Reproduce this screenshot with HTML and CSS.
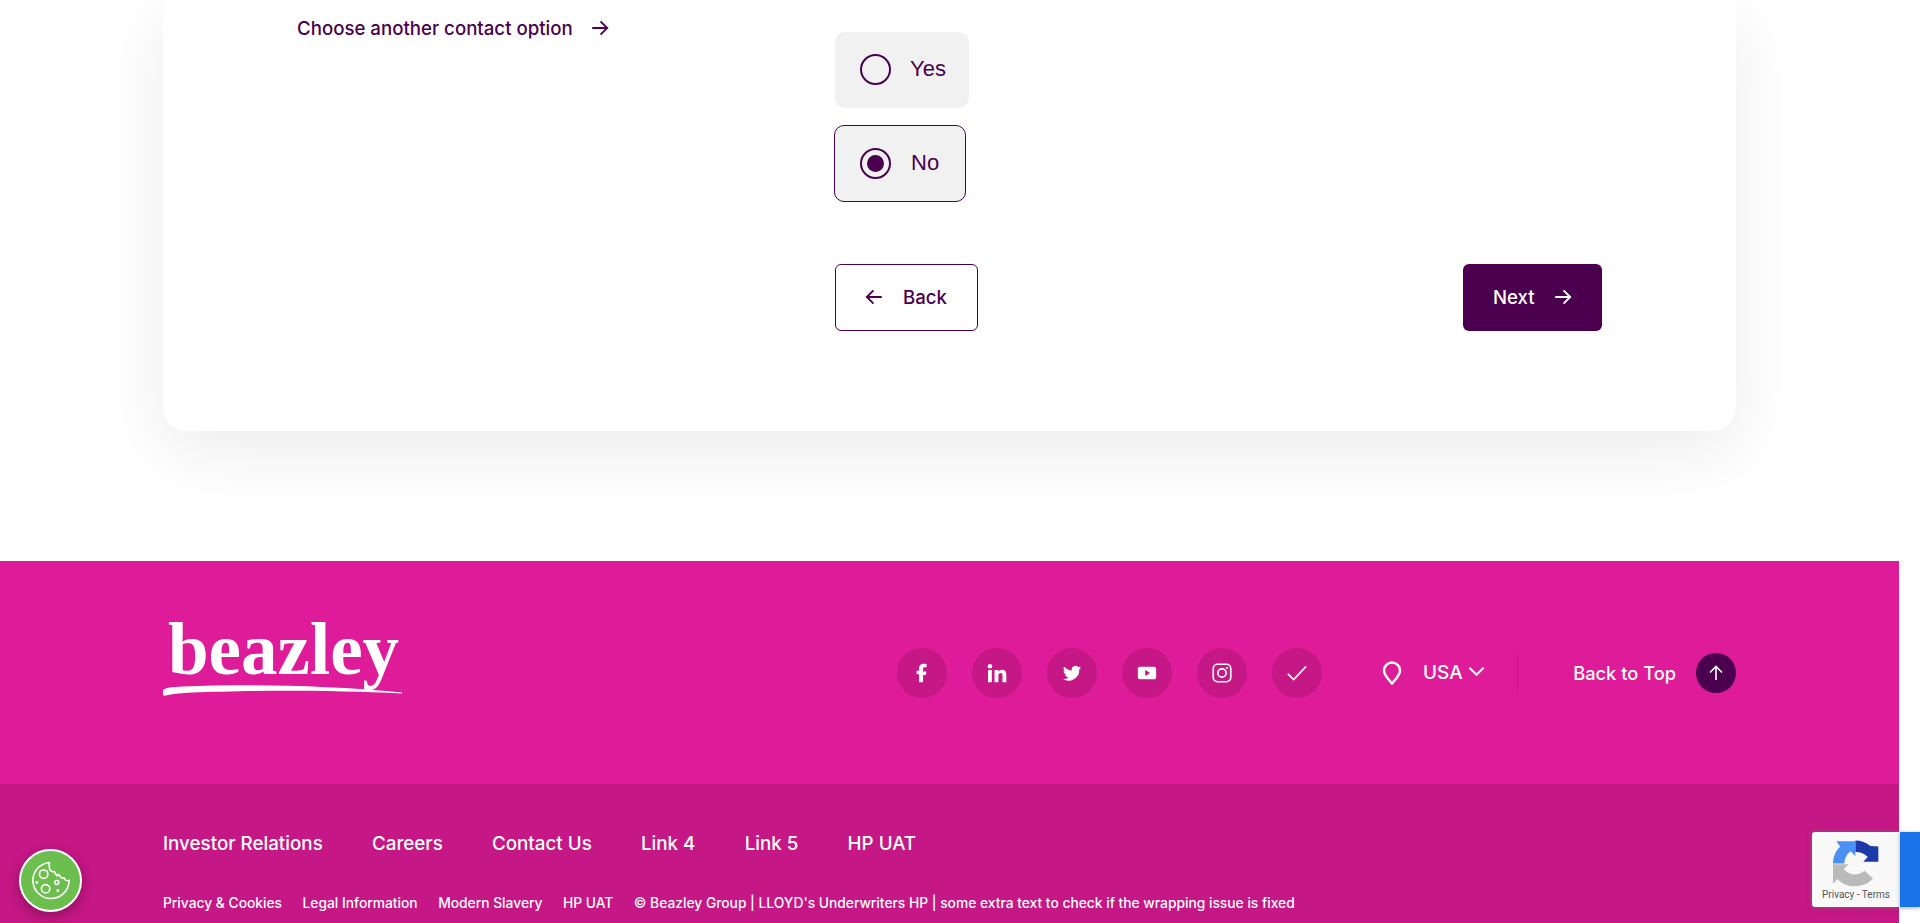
FILE: index.html
```html
<!DOCTYPE html>
<html lang="en">
<head>
<meta charset="utf-8">
<title>Beazley</title>
<link rel="stylesheet" href="styles.css">
</head>
<body>
<div class="page">
  <main class="main">
    <section class="card">
      <div class="side">
        <a class="contact-link" href="#">Choose another contact option
          <svg class="ico-arrow" viewBox="0 0 18 18"><path d="M2 9h13M9.500 3l6 6-6 6"/></svg>
        </a>
      </div>
      <form class="form">
        <div class="options">
          <label class="option option-yes"><span class="radio"></span><span>Yes</span></label>
          <label class="option option-no"><span class="radio radio-on"></span><span>No</span></label>
        </div>
        <div class="actions">
          <a class="btn btn-back" href="#"><svg class="ico-arrow" viewBox="0 0 18 18"><path d="M16 9H3M8.500 3l-6 6 6 6"/></svg>Back</a>
          <a class="btn btn-next" href="#">Next<svg class="ico-arrow" viewBox="0 0 18 18"><path d="M2 9h13M9.500 3l6 6-6 6"/></svg></a>
        </div>
      </form>
    </section>
  </main>
  <footer class="footer">
    <div class="footer-top">
      <a class="logo" href="#">
        <span class="logo-word">beazley</span>
        <svg class="logo-swoosh" viewBox="0 0 239 11"><path d="M0 5C3 2.500 8 2 20 1.500C80-1 160 0 239 7.500L239 8.500C160 4.500 80 5.500 30 7.500C15 8.300 5 9.500 1 11C-1 9 0 7 0 5Z"/></svg>
      </a>
      <div class="socials">
        <a class="social" href="#"><svg viewBox="0 0 24 24"><path class="fill" d="M8.500 23V13.500H5.500V9.200h3V6.600C8.500 3.200 10.500 1 14 1c1.500 0 3 .2 3.500.3v3.900h-2.300c-1.600 0-1.900.8-1.900 1.900v3.100h4l-.6 4.300h-3.400V23z"/></svg></a>
        <a class="social" href="#"><svg viewBox="0 0 24 24"><circle class="fill" cx="3.500" cy="4" r="2.700"/><path class="fill" d="M1.200 8.500h4.600V23H1.200zM9 8.500h4.400v2c.8-1.400 2.400-2.400 4.500-2.400 4.300 0 5.300 2.800 5.300 6.600V23h-4.600v-7.400c0-1.800-.1-3.600-2.300-3.600s-2.600 1.700-2.600 3.500V23H9z"/></svg></a>
        <a class="social" href="#"><svg viewBox="0 0 24 24"><path class="fill" d="M23 5.600c-.8.400-1.700.6-2.600.7.900-.6 1.600-1.400 2-2.500-.9.500-1.800.9-2.900 1.100A4.500 4.500 0 0 0 11.800 9C8 8.800 4.700 7 2.500 4.200c-1.200 2-.6 4.600 1.400 6-.7 0-1.400-.2-2-.6 0 2.200 1.500 4 3.600 4.500-.7.200-1.400.2-2 .1.600 1.800 2.200 3 4.200 3.100A9.100 9.100 0 0 1 1 19.200 12.800 12.800 0 0 0 20.700 7.800c.9-.6 1.700-1.300 2.300-2.200z"/></svg></a>
        <a class="social" href="#"><svg viewBox="0 0 24 24"><path class="fill" fill-rule="evenodd" d="M3.500 4.500h17c1.400 0 2.500 1.100 2.500 2.500v10c0 1.400-1.100 2.500-2.500 2.500h-17A2.500 2.500 0 0 1 1 17V7c0-1.400 1.100-2.500 2.500-2.500zM9.800 8.500v7l6-3.500z"/></svg></a>
        <a class="social" href="#"><svg viewBox="0 0 24 24"><rect class="line" x="1.500" y="1.500" width="21" height="21" rx="5"/><circle class="line" cx="12" cy="12" r="5"/><circle class="fill" cx="18" cy="6" r="1.300"/></svg></a>
        <a class="social" href="#"><svg viewBox="0 0 24 24"><path class="line" d="M1 13l7 7L23 4"/></svg></a>
      </div>
      <div class="region">
        <svg class="pin" viewBox="0 0 20 24"><path d="M10 22.500C6 18 2 14 2 9.500a8 8 0 0 1 16 0C18 14 14 18 10 22.500z"/></svg>
        <span>USA</span>
        <svg class="chev" viewBox="0 0 18 11"><path d="M1.500 1.500L9 9l7.500-7.500"/></svg>
      </div>
      <a class="to-top" href="#">Back to Top
        <span class="to-top-btn"><svg viewBox="0 0 18 18"><path d="M9 16V3M3 8.500l6-6 6 6"/></svg></span>
      </a>
    </div>
    <div class="footer-bottom">
      <nav class="links">
        <a href="#">Investor Relations</a>
        <a href="#">Careers</a>
        <a href="#">Contact Us</a>
        <a href="#">Link 4</a>
        <a href="#">Link 5</a>
        <a href="#">HP UAT</a>
      </nav>
      <div class="legal">
        <a href="#">Privacy &amp; Cookies</a>
        <a href="#">Legal Information</a>
        <a href="#">Modern Slavery</a>
        <a href="#">HP UAT</a>
        <span>© Beazley Group | LLOYD's Underwriters HP | some extra text to check if the wrapping issue is fixed</span>
      </div>
    </div>
  </footer>
</div>
<button class="cookie" type="button" aria-label="Cookies">
  <svg viewBox="0 0 44 44"><path class="cookie-line" d="M21 3.500a18.500 18.500 0 1 0 20 18.500c-2 .8-4.500-.3-5-2.500-2.200.6-4.500-.7-4.800-3-2.500.4-4.600-1-5-3.300-2.600 0-4.700-1.200-5.200-3.500-.5-2.200-.6-4.700 0-6.700z"/><circle class="cookie-line" cx="15" cy="15.500" r="4.300"/><circle class="cookie-line" cx="17" cy="30.500" r="4.300"/><circle class="cookie-line" cx="28.500" cy="24" r="2"/><circle class="cookie-dot" cx="8" cy="24" r="1.500"/><circle class="cookie-dot" cx="29" cy="16.500" r="1.500"/><circle class="cookie-dot" cx="29.500" cy="32.500" r="1.500"/></svg>
</button>
<aside class="recaptcha">
  <svg class="recaptcha-logo" viewBox="0 0 140 140">
    <path fill="#1c3aa9" d="M68 0C86 0 102 6 114 17L138 18V65H92L106 50C97 41 84 35 68 35Z"/>
    <path fill="#4a90f5" d="M68 2V48L54 33C42 41 35 55 35 70H0C0 50 8 31 22 19L10 2Z"/>
    <path fill="#bababa" d="M0 72H48L33 87C44 102 70 112 96 92L122 116C96 146 40 148 14 117L0 132Z"/>
  </svg>
  <span class="recaptcha-text">Privacy - Terms</span>
</aside>
<div class="recaptcha-tab"></div>
</body>
</html>
```

FILE: styles.css
```css
* { box-sizing: border-box; }
html, body { margin: 0; height: 923px; overflow: hidden; background: #fff; }
body { font-family: Inter, "Liberation Sans", sans-serif; color: #4b004f; position: relative; }
a { color: inherit; text-decoration: none; }
.page { width: 1899px; }

.main { padding: 0 163px 130px; }
.card {
  height: 431px;
  background: #fff;
  border-radius: 0 0 24px 24px;
  box-shadow: 0 20px 70px rgba(0, 0, 0, .08);
  padding: 0 134px;
  display: grid;
  grid-template-columns: 538px 1fr;
}
.contact-link { display: inline-flex; align-items: center; gap: 17px; font-size: 18.650px; font-weight: 450; line-height: 24px; margin-top: 16px; white-space: nowrap; }
.ico-arrow { width: 20px; height: 20px; fill: none; stroke: currentColor; stroke-width: 1.700; flex: none; }

.form { padding-top: 32px; }
.options { display: flex; flex-direction: column; align-items: flex-start; gap: 17px; }
.option { display: flex; align-items: center; gap: 19px; height: 76px; background: #f1f1f1; border-radius: 10px; font-family: "Liberation Sans", sans-serif; font-size: 22px; line-height: 26px; padding: 0 0 2px 25px; }
.option-yes { width: 134px; }
.option-no { width: 132px; height: 77px; margin-left: -1px; border: 1px solid #4b004f; padding-bottom: 1px; gap: 20px; }
.radio { width: 31px; height: 31px; border: 2px solid #4b004f; border-radius: 50%; display: flex; align-items: center; justify-content: center; flex: none; }
.radio-on::after { content: ""; width: 17px; height: 17px; border-radius: 50%; background: #4b004f; }

.actions { display: flex; justify-content: space-between; margin-top: 62px; }
.btn { height: 67px; display: flex; align-items: center; border-radius: 6px; font-size: 18.600px; font-weight: 450; padding-bottom: 2px; }
.btn-back { width: 143px; border: 1px solid #4b004f; padding-left: 28px; gap: 19px; }
.btn-next { width: 139px; background: #4b004f; color: #fff; padding-left: 30px; gap: 18px; }

.footer { background: #de1b98; color: #fff; }
.footer-top { height: 223px; padding: 0 163px; display: flex; align-items: center; }
.logo { width: 239px; display: flex; flex-direction: column; margin-top: -31px; flex: none; }
.logo-word { font-family: "Liberation Serif", serif; font-weight: 700; font-size: 73px; line-height: 64px; padding-left: 5px; white-space: nowrap; }
.logo-swoosh { width: 239px; height: 11px; fill: #fff; display: block; margin-top: 3px; }

.socials { display: flex; gap: 25px; margin-left: 495px; flex: none; }
.social { width: 50px; height: 50px; border-radius: 50%; background: #c51785; display: flex; align-items: center; justify-content: center; }
.social svg { width: 20px; height: 20px; }
.fill { fill: #fff; }
.line { fill: none; stroke: #fff; stroke-width: 2; }

.region { display: flex; align-items: center; margin-left: 60px; font-size: 19px; font-weight: 450; width: 136px; height: 40px; border-right: 1px solid #c51785; flex: none; }
.pin { width: 20px; height: 24px; fill: none; stroke: #fff; stroke-width: 2.500; margin-right: 21px; flex: none; }
.chev { width: 17px; height: 11px; margin-left: 5px; margin-top: -3px; fill: none; stroke: #fff; stroke-width: 2.300; flex: none; }
.to-top { display: flex; align-items: center; gap: 20px; font-size: 18.300px; font-weight: 450; line-height: 22px; padding-bottom: 0; margin-left: auto; white-space: nowrap; flex: none; }
.to-top-btn { width: 40px; height: 40px; border-radius: 50%; background: #4b004f; display: flex; align-items: center; justify-content: center; flex: none; }
.to-top-btn svg { width: 18px; height: 18px; fill: none; stroke: #fff; stroke-width: 1.600; }

.footer-bottom { height: 139px; background: #c51785; padding: 48px 163px 0; }
.links { display: flex; gap: 49.200px; font-size: 18.800px; font-weight: 450; line-height: 24px; }
.legal { display: flex; gap: 20.500px; font-size: 13.800px; font-weight: 450; line-height: 18px; margin-top: 38px; white-space: nowrap; }

.cookie { position: absolute; left: 19px; top: 849px; width: 63px; height: 63px; border: 2px solid #fff; border-radius: 50%; background: #6cbe4f; box-shadow: 0 4px 12px rgba(0, 0, 0, .3); padding: 8px; display: flex; }
.cookie svg { width: 100%; height: 100%; }
.cookie-line { fill: none; stroke: #fff; stroke-width: 1.600; }
.cookie-dot { fill: #fff; }

.recaptcha { position: absolute; left: 1812px; top: 832px; width: 88px; height: 75px; background: #f9f9f9; border-radius: 3px 0 0 3px; box-shadow: 0 0 5px rgba(120, 120, 120, .7); display: flex; flex-direction: column; align-items: center; padding-top: 8px; }
.recaptcha-logo { width: 46px; height: 47px; }
.recaptcha-text { font-family: Roboto, "Liberation Sans", sans-serif; font-size: 10px; color: #555; margin-top: 2px; white-space: nowrap; }
.recaptcha-tab { position: absolute; left: 1900px; top: 832px; width: 20px; height: 75px; background: #1a73e8; box-shadow: 0 1px 4px rgba(120, 120, 120, .6); }
```
